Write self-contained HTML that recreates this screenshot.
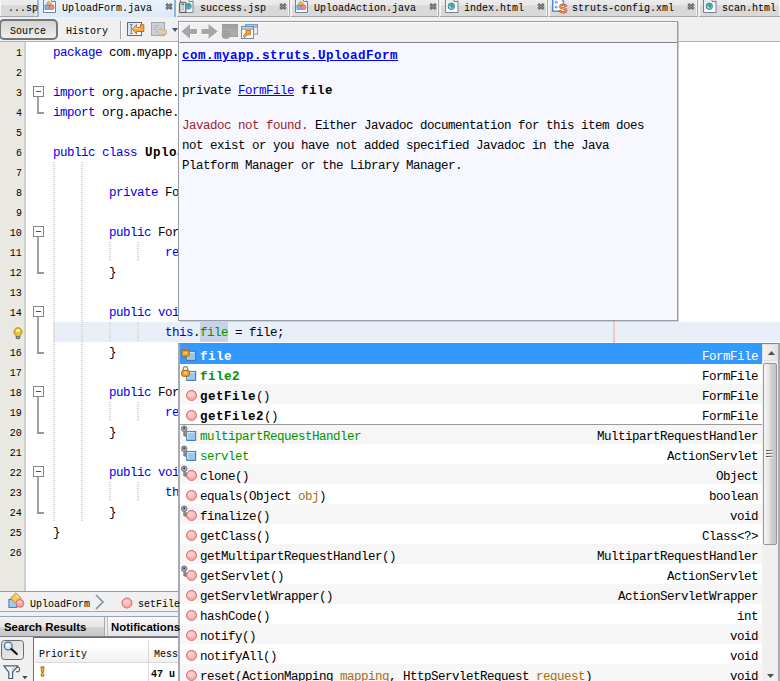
<!DOCTYPE html><html><head><meta charset="utf-8"><title>NetBeans</title><style>
*{margin:0;padding:0;box-sizing:border-box}
html,body{width:780px;height:681px;overflow:hidden;background:#fff}
body{position:relative;font-family:"Liberation Mono",monospace;font-size:12.5px;letter-spacing:-.5px;color:#000;line-height:20px}
.abs{position:absolute}
svg{position:absolute;overflow:visible}
.b{font-weight:bold;letter-spacing:.5px}
.t{font-family:"Liberation Mono",monospace;font-size:11.5px;letter-spacing:0;white-space:pre;display:inline-block;transform:scaleX(.8696);transform-origin:0 50%;color:#000;position:absolute;line-height:14px}
.kw{color:#0000e6}
.fld{color:#009400}
.par{color:#a66f12}
#tabbar{left:0;top:0;width:780px;height:17px;background:#f0f0f0}
.tab{position:absolute;top:0;height:17px;background:linear-gradient(#ececec 0,#e8e8e8 32%,#d8d8d8 36%,#d9d9d9 100%);border-right:1px solid #a9a9b0;border-bottom:1px solid #a4a4ac;box-shadow:inset -1px 0 0 #f6f6f6,inset 1px 0 0 #f6f6f6}
.tab.sel{box-shadow:none;background:linear-gradient(#eaf3fd,#dbe9f9);border-left:1.5px solid #9dbde0;border-right:2px solid #8fb4dc;border-bottom:none;height:17px}
.tab .t{top:2px}
.x{position:absolute;top:5px;width:7px;height:7px}
#toolbar{left:0;top:17px;width:780px;height:25px;background:#f0f0f0;border-bottom:1px solid #a3b5c9}
#srcbtn{left:-1px;top:19px;width:59px;height:21px;border:2px solid #767676;border-radius:5px;background:linear-gradient(#d4d4d4,#efefef)}
#gutter{left:0;top:42px;width:26px;height:549px;background:#e9e8e2;border-right:2px solid #d0d0cb}
.ln{position:absolute;right:758.5px;height:14px;line-height:14px;font-family:"Liberation Mono",monospace;font-size:11.5px;letter-spacing:0;white-space:pre;transform:scaleX(.8696);transform-origin:100% 50%}
.cl{position:absolute;left:53px;height:20px;line-height:20px;white-space:pre;font-size:12.5px}
.guide{position:absolute;width:2px;margin-left:-1px;background:repeating-linear-gradient(#d6d6d6 0,#d6d6d6 1px,transparent 1px,transparent 2px)}
.fbox{position:absolute;left:32.5px;width:11px;height:11px;border:1px solid #848484;background:#fff}
.fbox:after{content:"";position:absolute;left:2px;top:4px;width:5px;height:1px;background:#555}
.fline{position:absolute;left:37px;width:2px;background:#a2a2a2}
.ftick{position:absolute;left:37px;width:7px;height:1.5px;background:#989898}
#hl{left:53px;top:322px;width:727px;height:20px;background:#e9eff8}
#jd{left:178px;top:21px;width:500px;height:300px;background:#f7f7ff;border:1px solid #969ca6;box-shadow:1px 1px 0 rgba(150,156,168,.45)}
#jdbar{left:0;top:0;width:498px;height:21px;background:#f0f0f0;border-top:1px solid #fff;border-left:1px solid #fff;border-bottom:1px solid #808080}
.jl{position:absolute;left:3px;white-space:pre;line-height:20px;font-size:12.5px}
.lnk{color:#0000ff;text-decoration:underline}
#cc{left:178px;top:343px;width:602px;height:340px;background:#fff;border:1px solid #80868e;border-left:2px solid #a6aab2;border-right:2px solid #a8acb0}
.row{position:absolute;left:0;width:582px;height:20px;line-height:20px;white-space:pre;font-size:12.5px}
.row.g{background:#f6f6f6}
.row .l{position:absolute;left:20px;top:2.5px}
.row .r{position:absolute;right:4px;top:2.5px}
</style></head><body>
<svg width="0" height="0" style="left:0;top:0"><defs><linearGradient id="pg" x1="0" y1="0" x2="0" y2="1"><stop offset="0" stop-color="#dbe6f2"/><stop offset=".8" stop-color="#fff"/></linearGradient></defs></svg>
<div class="abs" id="tabbar">
<div class="tab" style="left:0;width:38px"></div><span class="t" style="left:8px;top:.5px;width:35px;overflow:hidden">...sp</span>
<div class="tab sel" style="left:38px;width:138px"></div><span class="t" style="left:61.5px;top:.5px">UploadForm.java</span><svg style="left:43px;top:-3px" width="13" height="16" viewBox="0 0 13 16"><path d="M0.5 0.5h8l4 4v11h-12z" fill="url(#pg)" stroke="#77828e"/><path d="M8.5 0.5v4h4" fill="#eef2f6" stroke="#77828e"/><path d="M5.8 4.2l2.9 2.9-2.9 2.9-2.9-2.9z" fill="#f0b646" stroke="#b8801e" stroke-width=".6"/><rect x="1.9" y="8.2" width="4.4" height="4.4" fill="#7ab4ea" stroke="#3c78c0" stroke-width=".6"/><circle cx="8.5" cy="10.2" r="2.5" fill="#f58484" stroke="#c84848" stroke-width=".6"/></svg><svg style="left:165px;top:3px" width="8" height="7" viewBox="0 0 8 7"><path d="M1.2 1l5.6 5M6.8 1l-5.6 5" stroke="#585858" stroke-width="2.6"/><path d="M1.4 1.2l5.2 4.6M6.6 1.2l-5.2 4.6" stroke="#a8a8a8" stroke-width=".9"/></svg>
<div class="tab" style="left:177px;width:113px"></div><span class="t" style="left:200px;top:.5px">success.jsp</span><svg style="left:179px;top:-3px" width="15" height="16" viewBox="0 0 15 16"><path d="M1.5 0.5h8.5l4 4v11h-12.5z" fill="url(#pg)" stroke="#77828e"/><path d="M10 0.5v4h4" fill="#eef2f6" stroke="#77828e"/><rect x="0.7" y="5.3" width="6.2" height="10.2" rx="1" fill="#e6e6e6" stroke="#4e545c" stroke-width="1.1"/><path d="M2.5 7.2h2.6" stroke="#303030" stroke-width="1"/><path d="M2.6 9.2h2.4M2.6 11h2.4M2.6 12.8h2.4" stroke="#a8a8a8" stroke-width=".9"/><circle cx="9.4" cy="9.3" r="3" fill="#5a9ce0" stroke="#3a74b8" stroke-width=".5"/><path d="M6.6 8.6a3 3 0 0 1 5.6-.6q-1.6 1.6-3 .9t-2.6-.3z" fill="#3cb43c"/></svg><svg style="left:279px;top:3px" width="8" height="7" viewBox="0 0 8 7"><path d="M1.2 1l5.6 5M6.8 1l-5.6 5" stroke="#585858" stroke-width="2.6"/><path d="M1.4 1.2l5.2 4.6M6.6 1.2l-5.2 4.6" stroke="#a8a8a8" stroke-width=".9"/></svg>
<div class="tab" style="left:291px;width:148px"></div><span class="t" style="left:314px;top:.5px">UploadAction.java</span><svg style="left:295px;top:-3px" width="13" height="16" viewBox="0 0 13 16"><path d="M0.5 0.5h8l4 4v11h-12z" fill="url(#pg)" stroke="#77828e"/><path d="M8.5 0.5v4h4" fill="#eef2f6" stroke="#77828e"/><path d="M5.8 4.2l2.9 2.9-2.9 2.9-2.9-2.9z" fill="#f0b646" stroke="#b8801e" stroke-width=".6"/><rect x="1.9" y="8.2" width="4.4" height="4.4" fill="#7ab4ea" stroke="#3c78c0" stroke-width=".6"/><circle cx="8.5" cy="10.2" r="2.5" fill="#f58484" stroke="#c84848" stroke-width=".6"/></svg><svg style="left:429px;top:3px" width="8" height="7" viewBox="0 0 8 7"><path d="M1.2 1l5.6 5M6.8 1l-5.6 5" stroke="#585858" stroke-width="2.6"/><path d="M1.4 1.2l5.2 4.6M6.6 1.2l-5.2 4.6" stroke="#a8a8a8" stroke-width=".9"/></svg>
<div class="tab" style="left:440px;width:108px"></div><span class="t" style="left:464px;top:.5px">index.html</span><svg style="left:445px;top:-3px" width="14" height="16" viewBox="0 0 14 16"><path d="M0.5 0.5h8.5l4 4v11h-12.5z" fill="url(#pg)" stroke="#77828e"/><path d="M9 0.5v4h4" fill="#eef2f6" stroke="#77828e"/><circle cx="6.3" cy="9.3" r="3.2" fill="#8cc0f0" stroke="#3a78c0" stroke-width="1"/><circle cx="6.6" cy="9" r="1.9" fill="#38b030"/><circle cx="5.6" cy="10.3" r=".8" fill="#d8ecfc"/></svg><svg style="left:537px;top:3px" width="8" height="7" viewBox="0 0 8 7"><path d="M1.2 1l5.6 5M6.8 1l-5.6 5" stroke="#585858" stroke-width="2.6"/><path d="M1.4 1.2l5.2 4.6M6.6 1.2l-5.2 4.6" stroke="#a8a8a8" stroke-width=".9"/></svg>
<div class="tab" style="left:549px;width:149px"></div><span class="t" style="left:571.5px;top:.5px">struts-config.xml</span><svg style="left:552px;top:-3px" width="16" height="17" viewBox="0 0 16 17"><path d="M0.8 0v14.2h8" fill="#fff" stroke="#4a88cc" stroke-width="1.3"/><path d="M0.8 0h7l4.5 4.5v9.7h-11.5z" fill="#fff"/><path d="M0.8 0v14.2h7M8 0l3.5 4.5v3" fill="none" stroke="#4a88cc" stroke-width="1.3"/><path d="M6.2 5.2h-3.2M4.4 3.8l-1.6 1.4 1.6 1.4M6.2 10.2h-3.2M4.4 8.8l-1.6 1.4 1.6 1.4" stroke="#5a94d4" stroke-width="1" fill="none"/><text x="6.9" y="15.6" font-family="Liberation Sans" font-weight="bold" font-size="12.5" fill="#f4c4a4" stroke="#c4602c" stroke-width=".9" letter-spacing="0">S</text></svg><svg style="left:687px;top:3px" width="8" height="7" viewBox="0 0 8 7"><path d="M1.2 1l5.6 5M6.8 1l-5.6 5" stroke="#585858" stroke-width="2.6"/><path d="M1.4 1.2l5.2 4.6M6.6 1.2l-5.2 4.6" stroke="#a8a8a8" stroke-width=".9"/></svg>
<div class="tab" style="left:699px;width:81px;border-right:none"></div><span class="t" style="left:721.5px;top:.5px">scan.html</span><svg style="left:703px;top:-3px" width="14" height="16" viewBox="0 0 14 16"><path d="M0.5 0.5h8.5l4 4v11h-12.5z" fill="url(#pg)" stroke="#77828e"/><path d="M9 0.5v4h4" fill="#eef2f6" stroke="#77828e"/><circle cx="6.3" cy="9.3" r="3.2" fill="#8cc0f0" stroke="#3a78c0" stroke-width="1"/><circle cx="6.6" cy="9" r="1.9" fill="#38b030"/><circle cx="5.6" cy="10.3" r=".8" fill="#d8ecfc"/></svg>
</div>
<div class="abs" id="toolbar"></div>
<div class="abs" id="srcbtn"></div><span class="t" style="left:10px;top:23.5px">Source</span><span class="t" style="left:66px;top:23.5px">History</span>
<div class="abs" style="left:120px;top:21px;width:1px;height:18px;background:#a0a0a0"></div><div class="abs" style="left:121px;top:21px;width:1px;height:18px;background:#fff"></div>
<svg style="left:127px;top:22px" width="18" height="15" viewBox="0 0 18 15"><defs><linearGradient id="g1" x1="0" y1="0" x2="1" y2="1"><stop offset="0" stop-color="#cfe0f4"/><stop offset="1" stop-color="#fff"/></linearGradient></defs><rect x="0.5" y="0.5" width="14" height="13" fill="url(#g1)" stroke="#5a6a80"/><path d="M2.8 2.5h3M4.3 2.5v9M2.8 11.5h3" stroke="#7888a0" stroke-width="1.1" fill="none"/><path d="M5.3 7.3l4.2-4.6v2.8h4v-2.8h3.3v6.8h-7.3v2.6z" fill="#f6a83c" stroke="#b8660c" stroke-width=".9" stroke-linejoin="round"/><path d="M7 7l2-2.2v1.7h4.6" stroke="#fcd690" stroke-width=".9" fill="none"/></svg>
<svg style="left:151px;top:22px" width="17" height="16" viewBox="0 0 17 16"><rect x="0.5" y="0.5" width="13" height="13" fill="#cdd0d4" stroke="#a4a8ae"/><path d="M2.5 3.5h6M2.5 5.5h4.5M2.5 7.5h3" stroke="#b4b8bc"/><path d="M5 10l5.4-3.9v2h5.2v4h-5.2v2.2z" fill="#dccbb8" stroke="#c0ae98" stroke-width=".8"/></svg>
<svg style="left:172px;top:28px" width="6" height="4" viewBox="0 0 6 4"><path d="M0 0h6l-3 4z" fill="#4a5568"/></svg>
<div class="abs" id="gutter"></div>
<div class="abs" id="hl"></div><div class="abs" style="left:200px;top:322px;width:28px;height:20px;background:#c6d3e8"></div>
<div class="abs" style="left:613px;top:42px;width:2px;height:549px;background:#f6c6c6"></div>
<div class="ln" style="top:46px">1</div>
<div class="ln" style="top:66px">2</div>
<div class="ln" style="top:86px">3</div>
<div class="ln" style="top:106px">4</div>
<div class="ln" style="top:126px">5</div>
<div class="ln" style="top:146px">6</div>
<div class="ln" style="top:166px">7</div>
<div class="ln" style="top:186px">8</div>
<div class="ln" style="top:206px">9</div>
<div class="ln" style="top:226px">10</div>
<div class="ln" style="top:246px">11</div>
<div class="ln" style="top:266px">12</div>
<div class="ln" style="top:286px">13</div>
<div class="ln" style="top:306px">14</div>
<div class="ln" style="top:346px">16</div>
<div class="ln" style="top:366px">17</div>
<div class="ln" style="top:386px">18</div>
<div class="ln" style="top:406px">19</div>
<div class="ln" style="top:426px">20</div>
<div class="ln" style="top:446px">21</div>
<div class="ln" style="top:466px">22</div>
<div class="ln" style="top:486px">23</div>
<div class="ln" style="top:506px">24</div>
<div class="ln" style="top:526px">25</div>
<div class="ln" style="top:546px">26</div>
<div class="cl" style="top:43px"><span class="kw">package</span> com.myapp.struts;</div>
<div class="cl" style="top:83px"><span class="kw">import</span> org.apache.struts.action.ActionForm;</div>
<div class="cl" style="top:103px"><span class="kw">import</span> org.apache.struts.upload.FormFile;</div>
<div class="cl" style="top:143px"><span class="kw">public</span> <span class="kw">class</span> <span class="b" style="margin-left:1px">UploadForm</span></div>
<div class="cl" style="top:183px">        <span class="kw">private</span> FormFile file;</div>
<div class="cl" style="top:223px">        <span class="kw">public</span> FormFile getFile() {</div>
<div class="cl" style="top:243px">                <span class="kw">return</span> file;</div>
<div class="cl" style="top:263px">        }</div>
<div class="cl" style="top:303px">        <span class="kw">public</span> <span class="kw">void</span> setFile(FormFile file) {</div>
<div class="cl" style="top:323px">                <span class="kw">this</span>.<span class="fld">file</span> = file;</div>
<div class="cl" style="top:343px">        }</div>
<div class="cl" style="top:383px">        <span class="kw">public</span> FormFile getFile2() {</div>
<div class="cl" style="top:403px">                <span class="kw">return</span> file2;</div>
<div class="cl" style="top:423px">        }</div>
<div class="cl" style="top:463px">        <span class="kw">public</span> <span class="kw">void</span> setFile2(FormFile file2) {</div>
<div class="cl" style="top:483px">                <span class="kw">this</span>.file2 = file2;</div>
<div class="cl" style="top:503px">        }</div>
<div class="cl" style="top:523px">}</div>
<div class="guide" style="left:54px;top:162px;height:360px"></div><div class="guide" style="left:82px;top:162px;height:360px"></div>
<div class="guide" style="left:110px;top:242px;height:20px"></div><div class="guide" style="left:138px;top:242px;height:20px"></div>
<div class="guide" style="left:110px;top:322px;height:20px"></div><div class="guide" style="left:138px;top:322px;height:20px"></div>
<div class="guide" style="left:110px;top:402px;height:20px"></div><div class="guide" style="left:138px;top:402px;height:20px"></div>
<div class="guide" style="left:110px;top:482px;height:20px"></div><div class="guide" style="left:138px;top:482px;height:20px"></div>
<div class="fbox" style="top:86px"></div><div class="fline" style="top:97px;height:15px"></div><div class="ftick" style="top:112px"></div>
<div class="fbox" style="top:226px"></div><div class="fline" style="top:237px;height:35px"></div><div class="ftick" style="top:272px"></div>
<div class="fbox" style="top:306px"></div><div class="fline" style="top:317px;height:35px"></div><div class="ftick" style="top:352px"></div>
<div class="fbox" style="top:386px"></div><div class="fline" style="top:397px;height:35px"></div><div class="ftick" style="top:432px"></div>
<div class="fbox" style="top:466px"></div><div class="fline" style="top:477px;height:35px"></div><div class="ftick" style="top:512px"></div>
<svg style="left:13px;top:326.6px" width="10" height="13" viewBox="0 0 10 13"><path d="M5 .6a4.2 4.2 0 0 0-2.6 7.4c.5.5.7 1 .7 1.6h3.8c0-.6.2-1.1.7-1.6A4.2 4.2 0 0 0 5 .6z" fill="#e6b824" stroke="#b48e1c" stroke-width=".9"/><ellipse cx="5" cy="3.6" rx="2.3" ry="1.5" fill="#fff6b8"/><path d="M3.6 5.2l1.4 2.6 1.4-2.6" stroke="#f6dc60" stroke-width=".8" fill="none"/><path d="M3 9.7h4v1.4q-2 1.8-4 0z" fill="#5a6e8c" stroke="#46566e" stroke-width=".6"/><path d="M4.4 10h1.2v1h-1.2z" fill="#dfe6ee"/></svg>
<div class="abs" id="jd"><div class="abs" id="jdbar"></div>
<div class="jl b" style="top:24px"><span class="lnk">com.myapp.struts.UploadForm</span></div>
<div class="jl" style="top:59px">private <span class="lnk">FormFile</span> <span class="b">file</span></div>
<div class="jl" style="top:94px"><span style="color:#a01c2c">Javadoc not found.</span> Either Javadoc documentation for this item does
not exist or you have not added specified Javadoc in the Java
Platform Manager or the Library Manager.</div>
<svg style="left:0;top:0" width="90" height="20" viewBox="0 0 90 20"><path d="M3.3 10.3L11.8 3.1V7.8H18.8V12.8H11.8V17.6Z" fill="#fff"/><path d="M2.5 9.5L11 2.3V7H18V12H11V16.8Z" fill="#a6a6a6"/><path d="M39.6 10.3L30.4 3.1V7.8H23.4V12.8H30.4V17.6Z" fill="#fff"/><path d="M38.8 9.5L29.6 2.3V7H22.6V12H29.6V16.8Z" fill="#a6a6a6"/><rect x="43.5" y="2.5" width="15" height="12" fill="#ababab" stroke="#a0a0a0"/><rect x="43.5" y="2.5" width="15" height="3.4" fill="#a2a2a2" stroke="#9c9c9c" stroke-width=".6"/><circle cx="46.9" cy="12.7" r="4" fill="#a4a4a4" stroke="#9a9a9a" stroke-width=".7"/><circle cx="46.9" cy="12.7" r="1.6" fill="#9c9c9c"/><rect x="66.5" y="2.5" width="12" height="9.5" fill="#eef4fa" stroke="#7d9cc0"/><rect x="66.5" y="2.5" width="12" height="2.6" fill="#a9c4e2" stroke="#7d9cc0"/><path d="M69 7.5h7M69 9.5h7" stroke="#c4d6ea"/><rect x="62.5" y="4.5" width="12" height="12" fill="#fff" stroke="#6b8bb2"/><rect x="62.5" y="4.5" width="12" height="2.6" fill="#c3d7ee" stroke="#6b8bb2"/><path d="M64.6 15l5-5M66.6 9.4h3.8v3.8" stroke="#b8660c" stroke-width="2.8" fill="none"/><path d="M64.6 15l5-5M66.6 9.4h3.8v3.8" stroke="#f6a83c" stroke-width="1.5" fill="none"/></svg>
</div>
<div class="abs" id="cc">
<div class="row g" style="top:0px;background:#3399ff;color:#fff"><svg style="left:-1px;top:0" width="20" height="20" viewBox="0 0 20 20"><rect x="7.7" y="7.4" width="9" height="9" fill="#98c8ee" stroke="#44739f" stroke-width="1"/><path d="M8.7 15.2v-6.8h6.8" stroke="#d4e9f9" stroke-width="1" fill="none"/><path d="M4.3 6.5v-1.6a2.2 2.2 0 0 1 4.4 0v1.6" stroke="#8a8a8a" stroke-width="1.3" fill="none"/><rect x="2.7" y="6.3" width="7.6" height="6" rx="1.6" fill="#f0a030" stroke="#a86410" stroke-width="1"/><path d="M5 8.3h3l-1.5 2z" fill="#fff0c0"/></svg><span class="l"><span class="b" style="color:#fff">file</span></span><span class="r">FormFile</span></div>
<div class="row" style="top:20px"><svg style="left:-1px;top:0" width="20" height="20" viewBox="0 0 20 20"><rect x="7.7" y="7.4" width="9" height="9" fill="#98c8ee" stroke="#44739f" stroke-width="1"/><path d="M8.7 15.2v-6.8h6.8" stroke="#d4e9f9" stroke-width="1" fill="none"/><path d="M4.3 6.5v-1.6a2.2 2.2 0 0 1 4.4 0v1.6" stroke="#8a8a8a" stroke-width="1.3" fill="none"/><rect x="2.7" y="6.3" width="7.6" height="6" rx="1.6" fill="#f0a030" stroke="#a86410" stroke-width="1"/><path d="M5 8.3h3l-1.5 2z" fill="#fff0c0"/></svg><span class="l"><span class="b fld">file2</span></span><span class="r">FormFile</span></div>
<div class="row g" style="top:40px"><svg style="left:-1px;top:0" width="20" height="20" viewBox="0 0 20 20"><circle cx="12.5" cy="11.4" r="5" fill="#fbaeae" stroke="#d66868" stroke-width="1"/><ellipse cx="12.2" cy="10.4" rx="3.2" ry="2.6" fill="#fdcaca"/></svg><span class="l"><span class="b">getFile</span>()</span><span class="r">FormFile</span></div>
<div class="row" style="top:60px"><svg style="left:-1px;top:0" width="20" height="20" viewBox="0 0 20 20"><circle cx="12.5" cy="11.4" r="5" fill="#fbaeae" stroke="#d66868" stroke-width="1"/><ellipse cx="12.2" cy="10.4" rx="3.2" ry="2.6" fill="#fdcaca"/></svg><span class="l"><span class="b">getFile2</span>()</span><span class="r">FormFile</span></div>
<div class="row g" style="top:80px"><svg style="left:-1px;top:0" width="20" height="20" viewBox="0 0 20 20"><rect x="7.7" y="7.4" width="9" height="9" fill="#98c8ee" stroke="#44739f" stroke-width="1"/><path d="M8.7 15.2v-6.8h6.8" stroke="#d4e9f9" stroke-width="1" fill="none"/><path d="M5.4 6.5v5.6M5.4 9.6h2.6M5.4 11.6h2.2" stroke="#7c838c" stroke-width="2.2" fill="none"/><circle cx="5.2" cy="4.7" r="2.8" fill="#a4aab2" stroke="#6c727a" stroke-width=".9"/><circle cx="5.2" cy="4.2" r="1.05" fill="#3c4046"/></svg><span class="l"><span class="fld">multipartRequestHandler</span></span><span class="r">MultipartRequestHandler</span></div>
<div class="row" style="top:100px"><svg style="left:-1px;top:0" width="20" height="20" viewBox="0 0 20 20"><rect x="7.7" y="7.4" width="9" height="9" fill="#98c8ee" stroke="#44739f" stroke-width="1"/><path d="M8.7 15.2v-6.8h6.8" stroke="#d4e9f9" stroke-width="1" fill="none"/><path d="M5.4 6.5v5.6M5.4 9.6h2.6M5.4 11.6h2.2" stroke="#7c838c" stroke-width="2.2" fill="none"/><circle cx="5.2" cy="4.7" r="2.8" fill="#a4aab2" stroke="#6c727a" stroke-width=".9"/><circle cx="5.2" cy="4.2" r="1.05" fill="#3c4046"/></svg><span class="l"><span class="fld">servlet</span></span><span class="r">ActionServlet</span></div>
<div class="row g" style="top:120px"><svg style="left:-1px;top:0" width="20" height="20" viewBox="0 0 20 20"><path d="M5.4 6.5v5.6M5.4 9.6h2.6M5.4 11.6h2.2" stroke="#7c838c" stroke-width="2.2" fill="none"/><circle cx="5.2" cy="4.7" r="2.8" fill="#a4aab2" stroke="#6c727a" stroke-width=".9"/><circle cx="5.2" cy="4.2" r="1.05" fill="#3c4046"/><circle cx="12.5" cy="11.4" r="5" fill="#fbaeae" stroke="#d66868" stroke-width="1"/><ellipse cx="12.2" cy="10.4" rx="3.2" ry="2.6" fill="#fdcaca"/></svg><span class="l">clone()</span><span class="r">Object</span></div>
<div class="row" style="top:140px"><svg style="left:-1px;top:0" width="20" height="20" viewBox="0 0 20 20"><circle cx="12.5" cy="11.4" r="5" fill="#fbaeae" stroke="#d66868" stroke-width="1"/><ellipse cx="12.2" cy="10.4" rx="3.2" ry="2.6" fill="#fdcaca"/></svg><span class="l">equals(Object <span class="par">obj</span>)</span><span class="r">boolean</span></div>
<div class="row g" style="top:160px"><svg style="left:-1px;top:0" width="20" height="20" viewBox="0 0 20 20"><path d="M5.4 6.5v5.6M5.4 9.6h2.6M5.4 11.6h2.2" stroke="#7c838c" stroke-width="2.2" fill="none"/><circle cx="5.2" cy="4.7" r="2.8" fill="#a4aab2" stroke="#6c727a" stroke-width=".9"/><circle cx="5.2" cy="4.2" r="1.05" fill="#3c4046"/><circle cx="12.5" cy="11.4" r="5" fill="#fbaeae" stroke="#d66868" stroke-width="1"/><ellipse cx="12.2" cy="10.4" rx="3.2" ry="2.6" fill="#fdcaca"/></svg><span class="l">finalize()</span><span class="r">void</span></div>
<div class="row" style="top:180px"><svg style="left:-1px;top:0" width="20" height="20" viewBox="0 0 20 20"><circle cx="12.5" cy="11.4" r="5" fill="#fbaeae" stroke="#d66868" stroke-width="1"/><ellipse cx="12.2" cy="10.4" rx="3.2" ry="2.6" fill="#fdcaca"/></svg><span class="l">getClass()</span><span class="r">Class&lt;?&gt;</span></div>
<div class="row g" style="top:200px"><svg style="left:-1px;top:0" width="20" height="20" viewBox="0 0 20 20"><circle cx="12.5" cy="11.4" r="5" fill="#fbaeae" stroke="#d66868" stroke-width="1"/><ellipse cx="12.2" cy="10.4" rx="3.2" ry="2.6" fill="#fdcaca"/></svg><span class="l">getMultipartRequestHandler()</span><span class="r">MultipartRequestHandler</span></div>
<div class="row" style="top:220px"><svg style="left:-1px;top:0" width="20" height="20" viewBox="0 0 20 20"><path d="M5.4 6.5v5.6M5.4 9.6h2.6M5.4 11.6h2.2" stroke="#7c838c" stroke-width="2.2" fill="none"/><circle cx="5.2" cy="4.7" r="2.8" fill="#a4aab2" stroke="#6c727a" stroke-width=".9"/><circle cx="5.2" cy="4.2" r="1.05" fill="#3c4046"/><circle cx="12.5" cy="11.4" r="5" fill="#fbaeae" stroke="#d66868" stroke-width="1"/><ellipse cx="12.2" cy="10.4" rx="3.2" ry="2.6" fill="#fdcaca"/></svg><span class="l">getServlet()</span><span class="r">ActionServlet</span></div>
<div class="row g" style="top:240px"><svg style="left:-1px;top:0" width="20" height="20" viewBox="0 0 20 20"><circle cx="12.5" cy="11.4" r="5" fill="#fbaeae" stroke="#d66868" stroke-width="1"/><ellipse cx="12.2" cy="10.4" rx="3.2" ry="2.6" fill="#fdcaca"/></svg><span class="l">getServletWrapper()</span><span class="r">ActionServletWrapper</span></div>
<div class="row" style="top:260px"><svg style="left:-1px;top:0" width="20" height="20" viewBox="0 0 20 20"><circle cx="12.5" cy="11.4" r="5" fill="#fbaeae" stroke="#d66868" stroke-width="1"/><ellipse cx="12.2" cy="10.4" rx="3.2" ry="2.6" fill="#fdcaca"/></svg><span class="l">hashCode()</span><span class="r">int</span></div>
<div class="row g" style="top:280px"><svg style="left:-1px;top:0" width="20" height="20" viewBox="0 0 20 20"><circle cx="12.5" cy="11.4" r="5" fill="#fbaeae" stroke="#d66868" stroke-width="1"/><ellipse cx="12.2" cy="10.4" rx="3.2" ry="2.6" fill="#fdcaca"/></svg><span class="l">notify()</span><span class="r">void</span></div>
<div class="row" style="top:300px"><svg style="left:-1px;top:0" width="20" height="20" viewBox="0 0 20 20"><circle cx="12.5" cy="11.4" r="5" fill="#fbaeae" stroke="#d66868" stroke-width="1"/><ellipse cx="12.2" cy="10.4" rx="3.2" ry="2.6" fill="#fdcaca"/></svg><span class="l">notifyAll()</span><span class="r">void</span></div>
<div class="row g" style="top:320px"><svg style="left:-1px;top:0" width="20" height="20" viewBox="0 0 20 20"><circle cx="12.5" cy="11.4" r="5" fill="#fbaeae" stroke="#d66868" stroke-width="1"/><ellipse cx="12.2" cy="10.4" rx="3.2" ry="2.6" fill="#fdcaca"/></svg><span class="l">reset(ActionMapping <span class="par">mapping</span>, HttpServletRequest <span class="par">request</span>)</span><span class="r">void</span></div>
<div class="abs" style="left:0;top:80px;width:582px;height:1px;background:#9a9a9a"></div>
<div class="abs" style="left:582px;top:0;width:16px;height:338px;background:#f0f0f0"></div>
<div class="abs" style="left:582px;top:0;width:16px;height:17px;background:linear-gradient(90deg,#f4f4f4,#e2e2e2);border:1px solid #e0e0e0"></div>
<svg style="left:587.5px;top:7px" width="7" height="4" viewBox="0 0 7 4"><path d="M0 4l3.5-4 3.5 4z" fill="#505050"/></svg>
<div class="abs" style="left:582.5px;top:18.5px;width:14.5px;height:182px;border:1px solid #979797;border-radius:2px;background:linear-gradient(90deg,#f6f6f6 0,#e4e4e4 45%,#d2d2d2 55%,#c4c4c4 100%)"></div>
<div class="abs" style="left:586px;top:105.5px;width:7px;height:1px;background:linear-gradient(90deg,#484848,#9a9a9a);box-shadow:0 1px 0 #f4f4f4"></div><div class="abs" style="left:586px;top:108.5px;width:7px;height:1px;background:linear-gradient(90deg,#484848,#9a9a9a);box-shadow:0 1px 0 #f4f4f4"></div><div class="abs" style="left:586px;top:111.5px;width:7px;height:1px;background:linear-gradient(90deg,#484848,#9a9a9a);box-shadow:0 1px 0 #f4f4f4"></div>
<svg style="left:587.3px;top:330px" width="7" height="4" viewBox="0 0 7 4"><path d="M0 0l3.5 4 3.5-4z" fill="#505050"/></svg>
</div>
<div class="abs" style="left:0;top:591px;width:178px;height:1px;background:#9a9a9a"></div>
<div class="abs" style="left:0;top:592px;width:178px;height:19px;background:#f0f0f0"></div>
<div class="abs" style="left:0;top:611px;width:178px;height:1px;background:#a8a8a8"></div>
<div class="abs" style="left:0;top:612px;width:178px;height:4px;background:#eef0f4"></div>
<div class="abs" style="left:0;top:616px;width:178px;height:1px;background:#98a4b8"></div>
<div class="abs" style="left:0;top:617px;width:178px;height:20px;background:#ececec"></div>
<div class="abs" style="left:0;top:617px;width:105px;height:20px;background:linear-gradient(#f2f2f2 0,#e6e6e6 48%,#d2d2d2 52%,#c6c6c6 100%);border-right:1px solid #a8a8a8"></div>
<div class="abs" style="left:107px;top:617px;width:71px;height:20px;background:linear-gradient(#fafafa,#e2e2e2);border-left:1px solid #c0c0c0"></div>
<div class="abs" style="left:0;top:636px;width:178px;height:1px;background:#7c828a"></div>
<div class="abs" style="left:0;top:637px;width:178px;height:44px;background:#f0f0f0"></div>
<div class="abs" style="left:4px;top:617px;height:20px;line-height:21px;font-family:'Liberation Sans',sans-serif;font-weight:bold;font-size:11.4px;letter-spacing:0;white-space:pre">Search Results</div>
<div class="abs" style="left:111px;top:617px;height:20px;line-height:21px;font-family:'Liberation Sans',sans-serif;font-weight:bold;font-size:11.4px;letter-spacing:0;white-space:pre">Notifications</div>
<svg style="left:8px;top:592px" width="18" height="17" viewBox="0 0 18 17"><rect x="0.9" y="7.4" width="7.8" height="8" fill="#9ccdf0" stroke="#3f6f9c" stroke-width=".9"/><path d="M7.9 .9l5.4 5.3-5.4 5.3-5.4-5.3z" fill="#f3c665" stroke="#b98a26" stroke-width=".9"/><path d="M7.9 2.8l2.6 2.6" stroke="#fbe6a8" stroke-width="1.2"/><circle cx="12" cy="11.4" r="3.9" fill="#f9a3a3" stroke="#d26464" stroke-width=".9"/><ellipse cx="11.6" cy="10.2" rx="2.3" ry="1.6" fill="#fdc6c6"/></svg>
<span class="t" style="left:30px;top:597px">UploadForm</span>
<svg style="left:95px;top:594px" width="10" height="16" viewBox="0 0 10 16"><path d="M1 1l7 7-7 7" stroke="#8090a0" stroke-width="1.6" fill="none"/></svg>
<svg style="left:120.7px;top:596.7px" width="12" height="12" viewBox="0 0 12 12"><circle cx="6" cy="6" r="5" fill="#fbaeae" stroke="#d66868"/><ellipse cx="5.7" cy="5" rx="3.2" ry="2.6" fill="#fdcaca"/></svg>
<span class="t" style="left:137.5px;top:597px">setFile</span>
<div class="abs" style="left:1px;top:639.5px;width:22.5px;height:20.5px;border:1.5px solid #6c6c6c;border-radius:3.5px;background:linear-gradient(135deg,#d6d6d6,#eee)"></div>
<svg style="left:0;top:636px" width="30" height="45" viewBox="0 0 30 45"><circle cx="8.3" cy="10" r="3.9" fill="#d8e8f8" stroke="#4e6c8c" stroke-width="1.2"/><circle cx="7.6" cy="9.2" r="1.6" fill="#f2f8fd"/><path d="M11.4 13l5.4 5" stroke="#141414" stroke-width="2.2" stroke-linecap="round"/><path d="M3.8 29.8h14.2l-5.4 6.4v6.3h-3.8v-6.3z" fill="#f2f5f8" stroke="#4c5c70" stroke-width="1.2" stroke-linejoin="round"/><path d="M14 30.4l-3.6 5.2h1.6l4-5.2z" fill="#c8d0d8"/><path d="M17 31.2q2.8-.2 2.6 2.4t-3.6 2" fill="none" stroke="#4c5c70" stroke-width="1.1"/><path d="M22.2 40h5.4l-2.7 3.2z" fill="#3c4a5c"/></svg>
<div class="abs" style="left:33px;top:637px;width:145px;height:44px;background:#fff;border-left:1.5px solid #707070;border-top:1.4px solid #6a6a6a"></div>
<div class="abs" style="left:35px;top:639px;width:143px;height:23px;background:linear-gradient(#fff 30%,#f0f0f0)"></div><div class="abs" style="left:35px;top:662px;width:143px;height:1px;background:#d8d8d8"></div>
<div class="abs" style="left:148px;top:640px;width:1px;height:41px;background:#d8d8d8"></div>
<span class="t" style="left:39px;top:647px">Priority</span><span class="t" style="left:153.5px;top:647px">Mess</span>
<span class="t" style="left:151px;top:666.5px;font-weight:bold">47 u</span>
<svg style="left:40px;top:666px" width="5" height="11" viewBox="0 0 5 11"><path d="M1 .8h3v1.5l-.7 4.2h-1.6l-.7-4.2z" fill="#f0a848" stroke="#a85808" stroke-width=".8"/><circle cx="2.5" cy="9" r="1.5" fill="#f0a848" stroke="#a85808" stroke-width=".8"/></svg>
</body></html>
